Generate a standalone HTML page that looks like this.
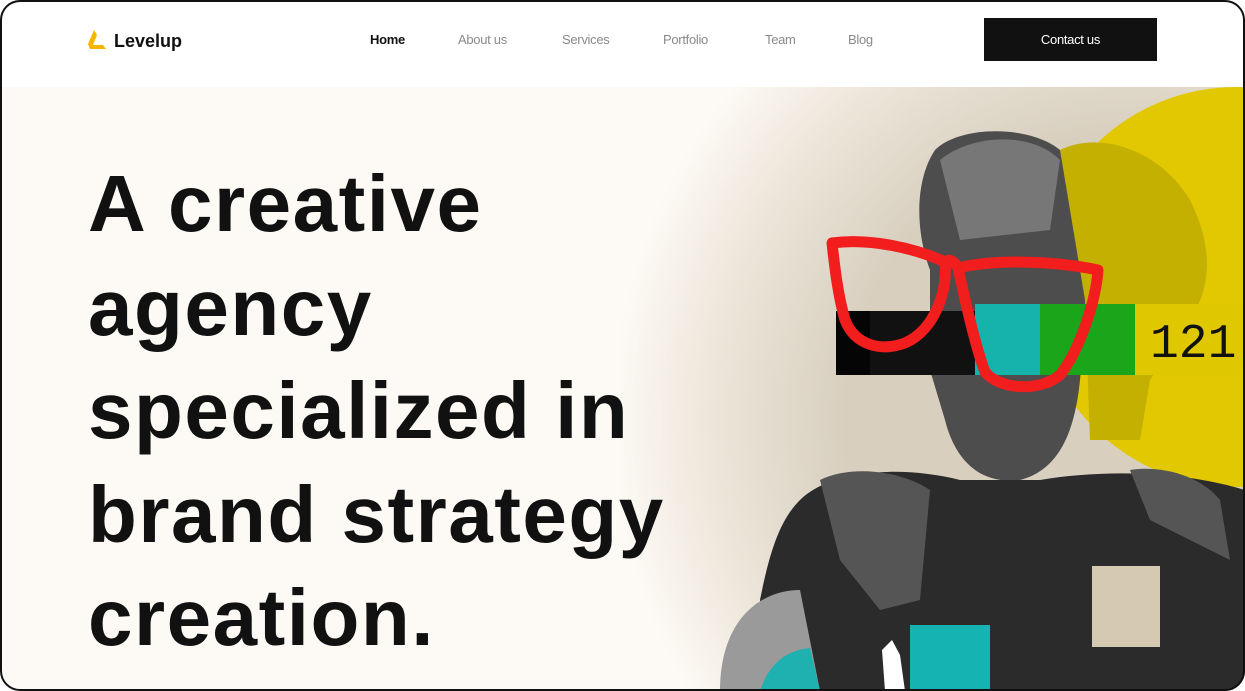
<!DOCTYPE html>
<html><head><meta charset="utf-8">
<style>
*{margin:0;padding:0;box-sizing:border-box}
html,body{width:1245px;height:691px;overflow:hidden;background:#fff}
.frame{position:absolute;left:0;top:0;width:1245px;height:691px;border-radius:20px;overflow:hidden;background:#fdfaf5}
.border{position:absolute;left:0;top:0;width:1245px;height:691px;border:2px solid #111;border-radius:20px;z-index:10;pointer-events:none}
.hdr{position:absolute;left:0;top:0;width:1245px;height:87px;background:#fff;z-index:3}
.logo{position:absolute;left:86px;top:28px;display:flex;align-items:center;font:bold 18px "Liberation Sans",sans-serif;color:#111}
.nav a{position:absolute;top:32px;font:13px "Liberation Sans",sans-serif;color:#8a8a8a;text-decoration:none;letter-spacing:-0.3px}
.btn{position:absolute;left:984px;top:18px;width:173px;height:43px;background:#111;color:#fff;font:13px "Liberation Sans",sans-serif;display:flex;align-items:center;justify-content:center;letter-spacing:-0.3px}
h1{position:absolute;left:88px;top:152px;font:bold 80px/103.5px "Liberation Sans",sans-serif;color:#111;letter-spacing:1.5px;z-index:2;white-space:nowrap}
svg.art{position:absolute;left:0;top:0}
</style></head><body>
<div class="frame">
<svg class="art" width="1245" height="691" viewBox="0 0 1245 691">
<defs>
<radialGradient id="fade" cx="1130" cy="420" r="520" gradientUnits="userSpaceOnUse">
<stop offset="0.55" stop-color="#d8cfbf"/><stop offset="0.8" stop-color="#ece5d9"/><stop offset="1" stop-color="#fdfaf5"/>
</radialGradient>
</defs>
<rect x="0" y="87" width="1245" height="604" fill="#fdfaf5"/>
<rect x="620" y="87" width="625" height="604" fill="url(#fade)"/>
<circle cx="1236" cy="287" r="200" fill="#e2c800"/>
<path d="M935 150 C960 125 1030 125 1060 150 C1095 175 1100 230 1090 280 L1080 380 C1075 430 1060 470 1020 480 C980 485 955 460 945 420 L930 370 L930 270 C915 230 915 180 935 150Z" fill="#4d4d4d"/>
<path d="M1060 150 C1100 130 1160 150 1190 200 C1215 250 1210 290 1190 320 L1150 380 L1140 440 L1090 440 L1085 300Z" fill="#c4b000"/>
<path d="M940 160 C970 135 1030 130 1060 160 L1050 230 L960 240Z" fill="#777"/>
<path d="M800 500 C830 470 900 465 960 480 L1040 480 C1100 470 1180 470 1245 490 L1245 691 L770 691 L760 600 C770 550 780 520 800 500Z" fill="#2b2b2b"/>
<path d="M720 691 C720 620 760 590 800 590 L820 691Z" fill="#9a9a9a"/>
<path d="M760 691 C770 660 790 650 810 648 L820 691Z" fill="#1fb0b0"/>
<path d="M820 480 C850 465 900 470 930 490 L920 600 L880 610 L840 560Z" fill="#555"/>
<path d="M1130 470 C1160 465 1200 475 1220 500 L1230 560 L1150 520Z" fill="#555"/>
<rect x="836" y="311" width="140" height="64" fill="#050505"/>
<rect x="870" y="311" width="110" height="64" fill="#111"/>
<rect x="975" y="304" width="80" height="71" fill="#16b3ac"/>
<rect x="1040" y="304" width="95" height="71" fill="#1aa51a"/>
<rect x="1135" y="304" width="110" height="71" fill="#e0c800"/>
<text x="1150" y="357" font-family="Liberation Mono,monospace" font-size="48" fill="#111">121</text>
<g fill="none" stroke="#f21d1d" stroke-width="11" stroke-linejoin="round">
<path d="M832 243 C870 238 915 248 945 262 C948 290 935 330 905 343 C880 352 855 345 845 320 C838 295 835 270 832 243Z"/>
<path d="M958 268 C1000 258 1060 262 1098 270 C1096 300 1080 350 1060 375 C1040 392 1000 390 985 372 C975 345 965 300 958 268Z"/>
<path d="M945 262 C950 258 955 262 958 268"/>
</g>
<rect x="1092" y="566" width="68" height="81" fill="#d5c9b2"/>
<rect x="910" y="625" width="80" height="66" fill="#16b3b3"/>
<path d="M885 691 L882 650 L892 640 L900 655 L905 691Z" fill="#fff"/>
</svg>
<div class="hdr">
<div class="logo"><svg width="22" height="26" viewBox="0 0 22 26" style="margin-right:6px"><path d="M8 2 L2 16 L4 21 L20 21 L17 17 L7 17 L11 7Z" fill="#f7b500"/></svg>Levelup</div>
<div class="nav">
<a style="left:370px;color:#111;font-weight:bold">Home</a>
<a style="left:458px">About us</a>
<a style="left:562px">Services</a>
<a style="left:663px">Portfolio</a>
<a style="left:765px">Team</a>
<a style="left:848px">Blog</a>
</div>
<div class="btn">Contact us</div>
</div>
<h1>A creative<br>agency<br>specialized in<br>brand strategy<br>creation.</h1>
</div>
<div class="border"></div>
</body></html>
